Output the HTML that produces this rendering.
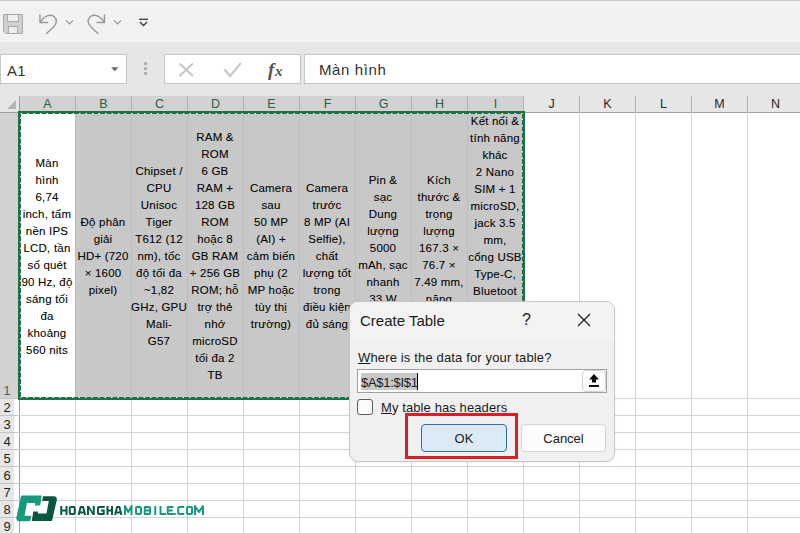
<!DOCTYPE html>
<html><head><meta charset="utf-8"><style>
*{margin:0;padding:0;box-sizing:border-box}
html,body{width:800px;height:533px;overflow:hidden;background:#fff;font-family:"Liberation Sans", sans-serif;position:relative}
div{position:absolute}
#qat{left:0;top:0;width:800px;height:42px;background:#f3f2f1;border-top:1px solid #cbcbcb}
#band{left:0;top:42px;width:800px;height:54px;background:#e6e6e6}
.box{background:#fff;border:1px solid #c6c6c6}
#sheet{left:0;top:96px;width:800px;height:437px;background:#fff}
.vl{top:112px;width:1px;height:421px;background:#d4d4d4}
.hl{left:19px;width:781px;height:1px;background:#d4d4d4}
.ch{top:96px;width:55px;height:17px;background:#e6e6e6;border-bottom:1px solid #9e9e9e;color:#262626;font-size:12.5px;line-height:17px;text-align:center}
.ch.sel{background:#d2d2d2;color:#2b5d45}
.cs{top:96px;width:1px;height:16px;background:#b0b0b0}
.rh{left:0;width:14px;height:16px;background:#e6e6e6;font-size:13px;line-height:18px;text-align:center;color:#1f1f1f}
.rs{left:0;width:19px;height:1px;background:#c6c6c6}
.t{width:56px;text-align:center;font-size:11.5px;line-height:16px;color:#000;white-space:nowrap;letter-spacing:.2px;-webkit-text-stroke:.08px #000}
#selfill{left:75px;top:112px;width:449px;height:287px;background:#c8c8c8}
</style></head><body>
<div id="qat">
 <svg style="position:absolute;left:0;top:0" width="160" height="42" viewBox="0 0 160 42">
  <path d="M3.5 13.5H22.5V32.5H6L3.5 30Z" fill="#d0d0d0" stroke="#a9a9a9" stroke-width="1"/>
  <rect x="7.5" y="13.5" width="11" height="7" fill="#eeeeee" stroke="#a9a9a9" stroke-width="1"/>
  <rect x="8.5" y="25.5" width="9" height="7" fill="#eeeeee" stroke="#a9a9a9" stroke-width="1"/>
  <g fill="none" stroke="#9a9a9a" stroke-width="1.5" stroke-linecap="round" stroke-linejoin="round">
   <path d="M40 14v7.5h7.5"/>
   <path d="M40.5 21 C44 15 50 12.5 54 15.5 C57.5 18.5 57 22.5 53.5 26 L46.5 32.5"/>
   <path d="M104.5 14v7.5h-7.5"/>
   <path d="M104 21 C100.5 15 94.5 12.5 90.5 15.5 C87 18.5 87.5 22.5 91 26 L98 32.5"/>
   <path d="M66.2 19.7l3.3 3.3 3.3-3.3" stroke-width="1.1"/>
   <path d="M114.2 19.7l3.3 3.3 3.3-3.3" stroke-width="1.1"/>
  </g>
  <g fill="none" stroke="#3a3a3a" stroke-width="1.3">
   <path d="M139 18.3h9"/>
   <path d="M140 21l3.5 3.5 3.5-3.5"/>
  </g>
 </svg>
</div>
<div id="band"></div>
<div class="box" style="left:0;top:54px;width:127px;height:30px"></div>
<div style="left:7px;top:61px;font-size:15px;line-height:19px;letter-spacing:.3px;color:#333">A1</div>
<svg style="position:absolute;left:110px;top:66px" width="10" height="7"><path d="M1 1.2h7.5l-3.75 4z" fill="#6b6b6b"/></svg>
<svg style="position:absolute;left:142px;top:60px" width="8" height="18"><rect x="2.2" y="2.3" width="2.7" height="2.7" fill="#a5a5a5"/><rect x="2.2" y="7.2" width="2.7" height="2.7" fill="#a5a5a5"/><rect x="2.2" y="12.1" width="2.7" height="2.7" fill="#a5a5a5"/></svg>
<div class="box" style="left:164px;top:54px;width:137px;height:30px"></div>
<svg style="position:absolute;left:164px;top:54px" width="137" height="30">
 <g stroke="#b9b9b9" stroke-width="1.5" fill="none">
  <path d="M15.5 9.5l13.5 12.5M29 9.5l-13.5 12.5" stroke-width="2" stroke="#c4c4c4"/>
  <path d="M60.5 15.5l5.5 6.5 11-13" stroke-width="2.4" stroke="#cacaca"/>
 </g>
 <text x="104" y="21.5" font-family="Liberation Serif" font-style="italic" font-weight="bold" font-size="19" fill="#555">f</text>
 <text x="111" y="22" font-family="Liberation Serif" font-style="italic" font-weight="bold" font-size="15" fill="#555">x</text>
</svg>
<div class="box" style="left:304px;top:54px;width:500px;height:30px"></div>
<div style="left:319px;top:60.5px;font-size:15px;line-height:18px;letter-spacing:.6px;color:#333">Màn hình</div>

<div id="sheet"></div>
<div style="left:0;top:96px;width:19px;height:16px;background:#e6e6e6"></div>
<svg style="position:absolute;left:0;top:96px" width="19" height="16"><path d="M16 4v9h-9z" fill="#b5b5b5"/></svg>
<div class="ch sel" style="left:20px">A</div><div class="cs" style="left:75px"></div><div class="ch sel" style="left:76px">B</div><div class="cs" style="left:131px"></div><div class="ch sel" style="left:132px">C</div><div class="cs" style="left:187px"></div><div class="ch sel" style="left:188px">D</div><div class="cs" style="left:243px"></div><div class="ch sel" style="left:244px">E</div><div class="cs" style="left:299px"></div><div class="ch sel" style="left:300px">F</div><div class="cs" style="left:355px"></div><div class="ch sel" style="left:356px">G</div><div class="cs" style="left:411px"></div><div class="ch sel" style="left:412px">H</div><div class="cs" style="left:467px"></div><div class="ch sel" style="left:468px">I</div><div class="cs" style="left:523px"></div><div class="ch" style="left:524px">J</div><div class="cs" style="left:579px"></div><div class="ch" style="left:580px">K</div><div class="cs" style="left:635px"></div><div class="ch" style="left:636px">L</div><div class="cs" style="left:691px"></div><div class="ch" style="left:692px">M</div><div class="cs" style="left:747px"></div><div class="ch" style="left:748px">N</div><div class="cs" style="left:803px"></div>
<div style="left:0;top:112px;width:19px;height:286px;background:#d2d2d2"></div>
<div style="left:0;top:383px;width:14px;height:17px;font-size:12.5px;line-height:17px;text-align:center;color:#555">1</div>
<div style="left:0;top:398px;width:19px;height:1px;background:#c6c6c6"></div>
<div class="rh" style="top:399px">2</div><div class="rs" style="top:415px"></div><div class="rh" style="top:416px">3</div><div class="rs" style="top:432px"></div><div class="rh" style="top:433px">4</div><div class="rs" style="top:449px"></div><div class="rh" style="top:450px">5</div><div class="rs" style="top:466px"></div><div class="rh" style="top:467px">6</div><div class="rs" style="top:483px"></div><div class="rh" style="top:484px">7</div><div class="rs" style="top:500px"></div><div class="rh" style="top:501px">8</div><div class="rs" style="top:517px"></div><div class="rh" style="top:518px">9</div><div class="rs" style="top:534px"></div>
<div style="left:19px;top:96px;width:1px;height:437px;background:#9e9e9e"></div>
<div style="left:0;top:112px;width:800px;height:1px;background:#9e9e9e"></div>
<div class="vl" style="left:75px"></div><div class="vl" style="left:131px"></div><div class="vl" style="left:187px"></div><div class="vl" style="left:243px"></div><div class="vl" style="left:299px"></div><div class="vl" style="left:355px"></div><div class="vl" style="left:411px"></div><div class="vl" style="left:467px"></div><div class="vl" style="left:523px"></div><div class="vl" style="left:579px"></div><div class="vl" style="left:635px"></div><div class="vl" style="left:691px"></div><div class="vl" style="left:747px"></div><div class="vl" style="left:803px"></div><div class="hl" style="top:398px"></div><div class="hl" style="top:415px"></div><div class="hl" style="top:432px"></div><div class="hl" style="top:449px"></div><div class="hl" style="top:466px"></div><div class="hl" style="top:483px"></div><div class="hl" style="top:500px"></div><div class="hl" style="top:517px"></div>
<div id="selfill"></div>
<div class="vl" style="left:75px;height:287px;background:#bdbdbd"></div><div class="vl" style="left:131px;height:287px;background:#bdbdbd"></div><div class="vl" style="left:187px;height:287px;background:#bdbdbd"></div><div class="vl" style="left:243px;height:287px;background:#bdbdbd"></div><div class="vl" style="left:299px;height:287px;background:#bdbdbd"></div><div class="vl" style="left:355px;height:287px;background:#bdbdbd"></div><div class="vl" style="left:411px;height:287px;background:#bdbdbd"></div><div class="vl" style="left:467px;height:287px;background:#bdbdbd"></div>
<div class="t" style="left:19px;top:155.30px">Màn</div><div class="t" style="left:19px;top:172.30px">hình</div><div class="t" style="left:19px;top:189.30px">6,74</div><div class="t" style="left:19px;top:206.30px">inch, tấm</div><div class="t" style="left:19px;top:223.30px">nền IPS</div><div class="t" style="left:19px;top:240.30px">LCD, tần</div><div class="t" style="left:19px;top:257.30px">số quét</div><div class="t" style="left:19px;top:274.30px">90 Hz, độ</div><div class="t" style="left:19px;top:291.30px">sáng tối</div><div class="t" style="left:19px;top:308.30px">đa</div><div class="t" style="left:19px;top:325.30px">khoảng</div><div class="t" style="left:19px;top:342.30px">560 nits</div><div class="t" style="left:75px;top:214.30px">Độ phân</div><div class="t" style="left:75px;top:231.30px">giải</div><div class="t" style="left:75px;top:248.30px">HD+ (720</div><div class="t" style="left:75px;top:265.30px">× 1600</div><div class="t" style="left:75px;top:282.30px">pixel)</div><div class="t" style="left:131px;top:163.30px">Chipset /</div><div class="t" style="left:131px;top:180.30px">CPU</div><div class="t" style="left:131px;top:197.30px">Unisoc</div><div class="t" style="left:131px;top:214.30px">Tiger</div><div class="t" style="left:131px;top:231.30px">T612 (12</div><div class="t" style="left:131px;top:248.30px">nm), tốc</div><div class="t" style="left:131px;top:265.30px">độ tối đa</div><div class="t" style="left:131px;top:282.30px">~1,82</div><div class="t" style="left:131px;top:299.30px">GHz, GPU</div><div class="t" style="left:131px;top:316.30px">Mali-</div><div class="t" style="left:131px;top:333.30px">G57</div><div class="t" style="left:187px;top:129.30px">RAM &amp;</div><div class="t" style="left:187px;top:146.30px">ROM</div><div class="t" style="left:187px;top:163.30px">6 GB</div><div class="t" style="left:187px;top:180.30px">RAM +</div><div class="t" style="left:187px;top:197.30px">128 GB</div><div class="t" style="left:187px;top:214.30px">ROM</div><div class="t" style="left:187px;top:231.30px">hoặc 8</div><div class="t" style="left:187px;top:248.30px">GB RAM</div><div class="t" style="left:187px;top:265.30px">+ 256 GB</div><div class="t" style="left:187px;top:282.30px">ROM; hỗ</div><div class="t" style="left:187px;top:299.30px">trợ thẻ</div><div class="t" style="left:187px;top:316.30px">nhớ</div><div class="t" style="left:187px;top:333.30px">microSD</div><div class="t" style="left:187px;top:350.30px">tối đa 2</div><div class="t" style="left:187px;top:367.30px">TB</div><div class="t" style="left:243px;top:180.30px">Camera</div><div class="t" style="left:243px;top:197.30px">sau</div><div class="t" style="left:243px;top:214.30px">50 MP</div><div class="t" style="left:243px;top:231.30px">(AI) +</div><div class="t" style="left:243px;top:248.30px">cảm biến</div><div class="t" style="left:243px;top:265.30px">phụ (2</div><div class="t" style="left:243px;top:282.30px">MP hoặc</div><div class="t" style="left:243px;top:299.30px">tùy thị</div><div class="t" style="left:243px;top:316.30px">trường)</div><div class="t" style="left:299px;top:180.30px">Camera</div><div class="t" style="left:299px;top:197.30px">trước</div><div class="t" style="left:299px;top:214.30px">8 MP (AI</div><div class="t" style="left:299px;top:231.30px">Selfie),</div><div class="t" style="left:299px;top:248.30px">chất</div><div class="t" style="left:299px;top:265.30px">lượng tốt</div><div class="t" style="left:299px;top:282.30px">trong</div><div class="t" style="left:299px;top:299.30px">điều kiện</div><div class="t" style="left:299px;top:316.30px">đủ sáng</div><div class="t" style="left:355px;top:172.30px">Pin &amp;</div><div class="t" style="left:355px;top:189.30px">sạc</div><div class="t" style="left:355px;top:206.30px">Dung</div><div class="t" style="left:355px;top:223.30px">lượng</div><div class="t" style="left:355px;top:240.30px">5000</div><div class="t" style="left:355px;top:257.30px">mAh, sạc</div><div class="t" style="left:355px;top:274.30px">nhanh</div><div class="t" style="left:355px;top:291.30px">33 W</div><div class="t" style="left:355px;top:308.30px">USB-C</div><div class="t" style="left:355px;top:325.30px">PD</div><div class="t" style="left:411px;top:172.30px">Kích</div><div class="t" style="left:411px;top:189.30px">thước &amp;</div><div class="t" style="left:411px;top:206.30px">trọng</div><div class="t" style="left:411px;top:223.30px">lượng</div><div class="t" style="left:411px;top:240.30px">167.3 ×</div><div class="t" style="left:411px;top:257.30px">76.7 ×</div><div class="t" style="left:411px;top:274.30px">7.49 mm,</div><div class="t" style="left:411px;top:291.30px">nặng</div><div class="t" style="left:411px;top:308.30px">185 g</div><div class="t" style="left:411px;top:325.30px"></div><div class="t" style="left:467px;top:113.30px">Kết nối &amp;</div><div class="t" style="left:467px;top:130.30px">tính năng</div><div class="t" style="left:467px;top:147.30px">khác</div><div class="t" style="left:467px;top:164.30px">2 Nano</div><div class="t" style="left:467px;top:181.30px">SIM + 1</div><div class="t" style="left:467px;top:198.30px">microSD,</div><div class="t" style="left:467px;top:215.30px">jack 3.5</div><div class="t" style="left:467px;top:232.30px">mm,</div><div class="t" style="left:467px;top:249.30px">cổng USB</div><div class="t" style="left:467px;top:266.30px">Type-C,</div><div class="t" style="left:467px;top:283.30px">Bluetoot</div><div class="t" style="left:467px;top:300.30px">h 5.0, Wi-</div><div class="t" style="left:467px;top:317.30px">Fi 802.11</div><div class="t" style="left:467px;top:334.30px">a/b/g/n/a</div><div class="t" style="left:467px;top:351.30px">c, GPS,</div><div class="t" style="left:467px;top:368.30px">NFC</div>
<div style="left:18px;top:111px;width:507px;height:289px;border:3px solid #1e7145"></div>
<svg style="position:absolute;left:0;top:0" width="800" height="533"><rect x="20.5" y="113.5" width="502" height="284" fill="none" stroke="#fff" stroke-width="1" stroke-dasharray="1.5 5" opacity=".9"/></svg>

<!-- logo -->
<svg style="position:absolute;left:0;top:480px" width="220" height="53" viewBox="0 480 220 53">
 <path d="M22 495.6H41.6L40.2 505.4H35V503.1H26.9L24.6 515.7H31.3L30.1 521.2H19.5Q16 521.2 16.4 517.5L20.5 498.5Q21 495.6 22 495.6Z" fill="#169a7c"/>
 <path d="M43 496.2H53.7Q57.3 496.2 56.8 500L52 520.9H31.8L33.3 511.4H37.9V513.4H46.5L48.8 501.1H42.2Z" fill="#0a5641"/>
 <path d="M61.25 506.0V515.0M66.50 506.0V515.0M61.25 510.5H66.50M69.75 508.0Q69.75 507.0 70.75 507.0H73.75Q74.75 507.0 74.75 508.0V513.0Q74.75 514.0 73.75 514.0H70.75Q69.75 514.0 69.75 513.0ZM78.60 515.0L80.67 507.0H83.08L85.15 515.0M80.20 512.5H83.55M104.75 507.0H99.00Q98.00 507.0 98.00 508.0V513.0Q98.00 514.0 99.00 514.0H103.75V510.5H100.88M107.50 506.0V515.0M112.00 506.0V515.0M107.50 510.5H112.00M115.10 515.0L117.05 507.0H119.45L121.40 515.0M116.70 512.5H119.80" fill="none" stroke="#0b5843" stroke-width="2.0" stroke-linejoin="round"/>
 <path d="M87 506H89.1L92.75 512V506H94.75V515H92.65L89 509V515H87Z" fill="#0b5843"/>
 <path d="M125.00 515.0V506.0L128.25 512.0L131.50 506.0V515.0M136.00 508.0Q136.00 507.0 137.00 507.0H140.00Q141.00 507.0 141.00 508.0V513.0Q141.00 514.0 140.00 514.0H137.00Q136.00 514.0 136.00 513.0ZM144.75 507.0H149.00Q150.00 507.0 150.00 508.0V513.0Q150.00 514.0 149.00 514.0H144.75ZM144.75 510.5H150.00M155.25 506.0V515.0M160.50 506.0V514.0H166.00M173.50 507.0H167.75V514.0H173.50M167.75 510.5H172.70M174.75 513.0V515.0M184.25 507.0H179.25Q178.25 507.0 178.25 508.0V513.0Q178.25 514.0 179.25 514.0H184.25M187.00 508.0Q187.00 507.0 188.00 507.0H191.00Q192.00 507.0 192.00 508.0V513.0Q192.00 514.0 191.00 514.0H188.00Q187.00 514.0 187.00 513.0ZM195.00 515.0V506.0L199.00 512.0L203.00 506.0V515.0" fill="none" stroke="#179a7d" stroke-width="2.0" stroke-linejoin="round"/>
</svg>

<!-- dialog -->
<div style="left:349px;top:301px;width:266px;height:161px;background:#f0f0f0;border:1px solid #c6c6c6;border-radius:9px;box-shadow:0 1px 3px rgba(0,0,0,.05)"></div>
<div style="left:350px;top:302px;width:264px;height:38px;background:#f3f3f3;border-radius:8px 8px 0 0"></div>
<div style="left:360px;top:311px;font-size:15px;line-height:20px;color:#1a1a1a">Create Table</div>
<div style="left:522px;top:310px;font-size:16px;line-height:20px;color:#1a1a1a">?</div>
<svg style="position:absolute;left:576px;top:312px" width="16" height="16"><path d="M2 2l12 12M14 2L2 14" stroke="#222" stroke-width="1.3" fill="none"/></svg>
<div style="left:358px;top:350px;font-size:13px;letter-spacing:.15px;line-height:16px;color:#1a1a1a"><u>W</u>here is the data for your table?</div>
<div style="left:357px;top:369px;width:250px;height:24px;background:#fff;border:1px solid #a0a0a0"></div>
<div style="left:361px;top:373px;width:56px;height:17px;background:#c8c8c8"></div>
<div style="left:361px;top:373.5px;font-size:13px;line-height:17px;letter-spacing:-.3px;color:#1a1a1a">$A$1:$I$1</div>
<div style="left:417px;top:373px;width:1px;height:17px;background:#000"></div>
<div style="left:582px;top:370px;width:24px;height:22px;background:#fcfcfc;border:1px solid #d2d2d2;border-radius:4px"></div>
<svg style="position:absolute;left:582px;top:370px" width="24" height="22"><path d="M12 4l-5 5.5h3v3h4v-3h3z" fill="#111"/><rect x="7" y="15" width="10" height="2" fill="#111"/></svg>
<div style="left:357px;top:399px;width:16px;height:16px;background:#fbfbfb;border:1px solid #5e5e5e;border-radius:3px"></div>
<div style="left:381px;top:400px;font-size:13px;letter-spacing:.1px;line-height:16px;color:#1a1a1a"><u>M</u>y table has headers</div>
<div style="left:421px;top:424px;width:86px;height:28px;background:#dceaf7;border:1px solid #2f6fae;border-radius:4px"></div>
<div style="left:421px;top:431px;width:86px;text-align:center;font-size:13px;line-height:16px;color:#1a1a1a">OK</div>
<div style="left:521px;top:424px;width:85px;height:28px;background:#fcfcfc;border:1px solid #d5d5d5;border-radius:4px"></div>
<div style="left:521px;top:431px;width:85px;text-align:center;font-size:13px;line-height:16px;color:#1a1a1a">Cancel</div>
<div style="left:405px;top:413px;width:113px;height:46px;border:3px solid #d71f29"></div>
</body></html>
